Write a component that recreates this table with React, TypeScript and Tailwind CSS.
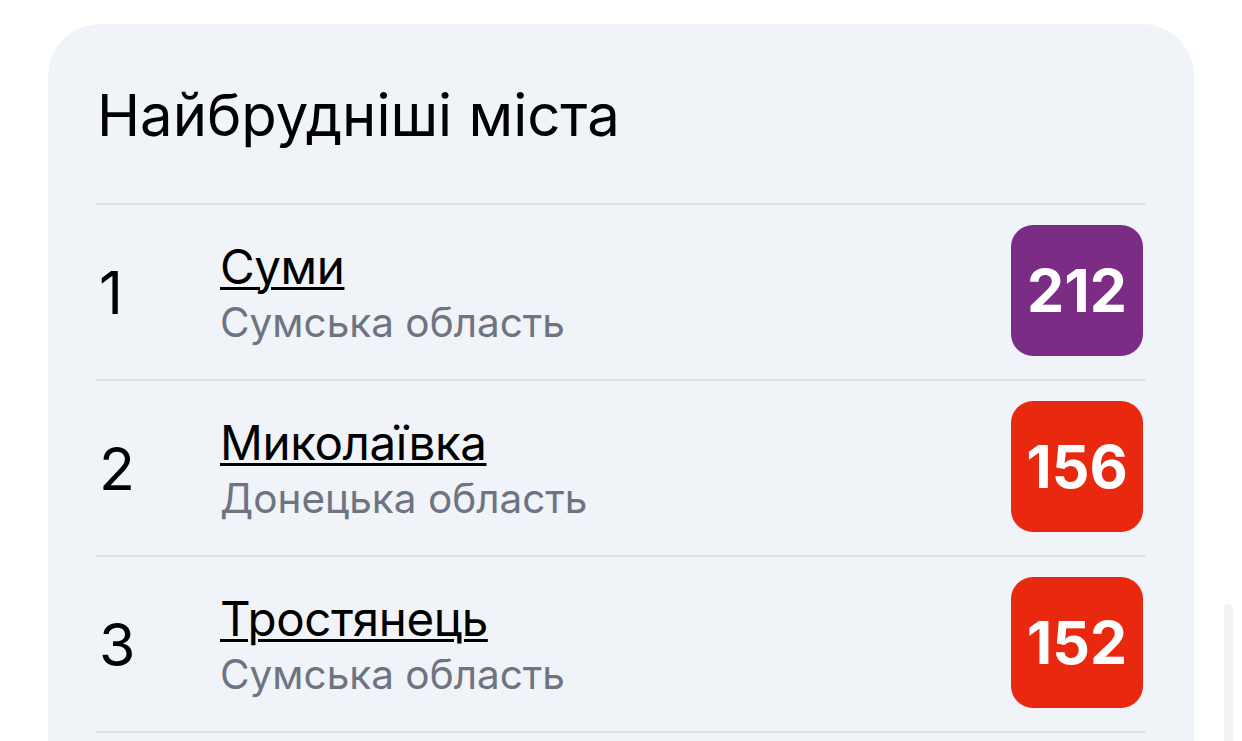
import React from 'react';

type City = {
  rank: number;
  name: string;
  region: string;
  aqi: number;
  color: string;
};

const cities: City[] = [
  { rank: 1, name: 'Суми', region: 'Сумська область', aqi: 212, color: 'bg-[#7b2c85]' },
  { rank: 2, name: 'Миколаївка', region: 'Донецька область', aqi: 156, color: 'bg-[#e9290f]' },
  { rank: 3, name: 'Тростянець', region: 'Сумська область', aqi: 152, color: 'bg-[#e9290f]' },
];

const CityRow: React.FC<{ city: City }> = ({ city }) => (
  <li className="flex items-center h-[176px] border-t-2 border-[#dfe2e8]">
    <span className="w-[124px] pl-[3px] text-[59px] leading-none text-black">{city.rank}</span>
    <div className="flex-1 flex flex-col pt-[4px]">
      <a
        href="#"
        className="self-start text-[47.5px] leading-[58px] tracking-[-0.4px] text-black underline decoration-[3px] underline-offset-[3px]"
      >
        {city.name}
      </a>
      <span className="text-[40.5px] leading-[54px] text-[#6e7482]">{city.region}</span>
    </div>
    <div
      className={`${city.color} w-[132px] h-[131px] mr-[3px] mb-[3px] rounded-[22px] flex items-center justify-center text-white font-bold text-[59px] leading-none`}
    >
      {city.aqi}
    </div>
  </li>
);

const App: React.FC = () => {
  return (
    <div
      className="relative w-[1242px] h-[741px] overflow-hidden bg-white"
      style={{ fontFamily: 'Inter, "Noto Sans", sans-serif' }}
    >
      <div className="mt-[24px] ml-[48px] w-[1146px] min-h-[800px] rounded-t-[52px] bg-[#f0f3f8] px-[48px] pt-[55px]">
        <h2 className="text-[58px] leading-[72px] font-normal text-black pl-[1px]">Найбрудніші міста</h2>
        <ul className="mt-[52px]">
          {cities.map((c) => (
            <CityRow key={c.rank} city={c} />
          ))}
          <li className="border-t-2 border-[#dfe2e8] h-[40px]" />
        </ul>
      </div>
      {/* faint scrollbar */}
      <div className="absolute left-[1224px] top-[604px] w-[9px] h-[160px] rounded-full bg-[#f3f3f4]" />
    </div>
  );
};

export default App;
